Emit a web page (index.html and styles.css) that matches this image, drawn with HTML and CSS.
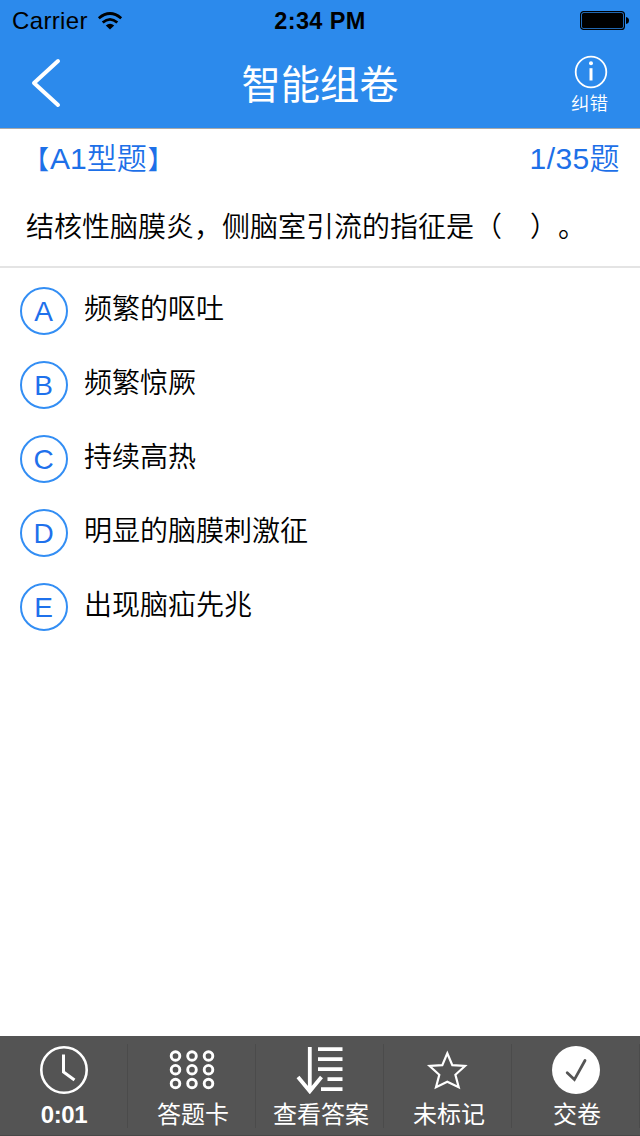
FILE: index.html
```html
<!DOCTYPE html>
<html lang="zh-CN">
<head>
<meta charset="utf-8">
<title>智能组卷</title>
<link rel="stylesheet" href="styles.css">
</head>
<body>
<div class="screen">
  <header class="header">
    <div class="status">
      <div class="carrier"><span>Carrier</span>
        <svg class="wifi" width="26" height="20" viewBox="0 0 26 20"><g fill="none" stroke="#000" stroke-width="2.8"><path d="M1.8 7.2Q13 -2.2 24.2 7.2"/><path d="M5.7 11.5Q13 5.2 20.3 11.5"/></g><path d="M8.8 14.4Q13 11.2 17.2 14.4L13 18.6Z"/></svg>
      </div>
      <time class="clock">2:34 PM</time>
      <svg class="battery" width="50" height="20" viewBox="0 0 50 20"><rect x=".6" y=".6" width="43.8" height="17.8" rx="3" fill="none" stroke="#000" stroke-width="1.2"/><rect x="2" y="2" width="41" height="15" rx="1.6"/><path d="M46 6Q49 6.5 49 9.5T46 13Z"/></svg>
    </div>
    <div class="nav">
      <svg class="back" width="32" height="52" viewBox="0 0 32 52"><path d="M28 4L4 26L28 48" fill="none" stroke="#fff" stroke-width="4" stroke-linecap="round" stroke-linejoin="round"/></svg>
      <h1 class="title">智能组卷</h1>
      <div class="report">
        <svg width="34" height="34" viewBox="0 0 34 34"><circle cx="17" cy="17" r="15.3" fill="none" stroke="#fff" stroke-width="1.8"/><circle cx="17" cy="8.2" r="2" fill="#fff"/><path d="M17 13.2V25.5" stroke="#fff" stroke-width="3"/></svg>
        <span class="report-label">纠错</span>
      </div>
    </div>
  </header>
  <section class="question">
    <div class="meta"><span><span class="bracket open">【</span>A1型题<span class="bracket">】</span></span><span class="counter">1/35题</span></div>
    <p class="stem">结核性脑膜炎，侧脑室引流的指征是（　）。</p>
  </section>
  <ul class="options">
    <li class="option"><span class="letter">A</span><span class="answer">频繁的呕吐</span></li>
    <li class="option"><span class="letter">B</span><span class="answer">频繁惊厥</span></li>
    <li class="option"><span class="letter">C</span><span class="answer">持续高热</span></li>
    <li class="option"><span class="letter">D</span><span class="answer">明显的脑膜刺激征</span></li>
    <li class="option"><span class="letter">E</span><span class="answer">出现脑疝先兆</span></li>
  </ul>
  <footer class="toolbar">
    <div class="tool">
      <svg width="48" height="48" viewBox="0 0 48 48" fill="none" stroke="#fff"><circle cx="24" cy="24" r="22.7" stroke-width="2.6"/><path d="M23.5 8.5V26L34.5 34" stroke-width="3"/></svg>
      <span class="tool-label time">0:01</span>
    </div>
    <div class="tool">
      <svg width="48" height="48" viewBox="0 0 48 48" fill="none" stroke="#fff" stroke-width="2.9"><circle cx="7.5" cy="10" r="4.3"/><circle cx="24" cy="10" r="4.3"/><circle cx="40.5" cy="10" r="4.3"/><circle cx="7.5" cy="23.7" r="4.3"/><circle cx="24" cy="23.7" r="4.3"/><circle cx="40.5" cy="23.7" r="4.3"/><circle cx="7.5" cy="37.5" r="4.3"/><circle cx="24" cy="37.5" r="4.3"/><circle cx="40.5" cy="37.5" r="4.3"/></svg>
      <span class="tool-label">答题卡</span>
    </div>
    <div class="tool">
      <svg width="48" height="48" viewBox="0 0 48 48" fill="none" stroke="#fff"><path d="M13.8 1V45M2 31L13.8 45.3L25.5 31" stroke-width="3.8"/><path d="M22 3.2H46.5M22 13.2H46.5M22 23.2H46.5M31.5 33.2H46.5M25 43.2H46.5" stroke-width="3.8"/></svg>
      <span class="tool-label">查看答案</span>
    </div>
    <div class="tool">
      <svg width="48" height="48" viewBox="0 0 48 48"><path d="M23.3 7.3L28.3 19.2L41 20L31.4 28.8L34.7 41.3L23.3 35.8L12 41.3L15.3 28.8L5.6 20L18.3 19.2Z" fill="none" stroke="#fff" stroke-width="2.2"/></svg>
      <span class="tool-label">未标记</span>
    </div>
    <div class="tool">
      <svg width="48" height="48" viewBox="0 0 48 48"><circle cx="24" cy="24" r="24" fill="#fff"/><path d="M15.2 26.8L22.4 33.6L33 14.5" fill="none" stroke="#555" stroke-width="2.8" stroke-linecap="round"/></svg>
      <span class="tool-label">交卷</span>
    </div>
  </footer>
</div>
</body>
</html>
```
FILE: styles.css
```css
* { box-sizing: border-box; }
body { margin: 0; background: #fff; }
.screen {
  display: flex;
  flex-direction: column;
  width: 640px;
  height: 1136px;
  color: #000;
  font-family: "Liberation Sans", "Noto Sans CJK SC", sans-serif;
  font-weight: 350;
  text-spacing-trim: space-all;
  white-space: nowrap;
}
svg { display: block; }
.header { height: 129px; background: #2c8aec; border-bottom: 1px solid #a9a9a9; }
.status {
  display: grid;
  grid-template-columns: 1fr auto 1fr;
  align-items: center;
  height: 40px;
  padding: 2px 10px 0 12px;
  font-size: 24px;
  line-height: 38px;
}
.carrier { display: flex; align-items: center; gap: 9px; letter-spacing: 0.35px; }
.clock { margin-right: 2px; font-weight: 700; font-size: 23.5px; letter-spacing: 0.4px; }
.battery { justify-self: end; }
.nav {
  display: grid;
  grid-template-columns: 120px 1fr 120px;
  height: 88px;
  color: #fff;
}
.back { margin: 17px 0 0 30px; }
.title { margin: 0; font-size: 39.3px; font-weight: 400; line-height: 90px; text-align: center; }
.report { display: flex; flex-direction: column; align-items: center; padding: 15px 0 0 21px; }
.report-label { margin: 2px 2px 0 0; font-size: 18.5px; line-height: 26px; }
.question { height: 139px; border-bottom: 2px solid #e4e4e4; }
.meta {
  display: flex;
  justify-content: space-between;
  height: 52px;
  padding: 8px 20px 0;
  color: #1d70e8;
  font-size: 30px;
  line-height: 44px;
}
.bracket { display: inline-block; width: 30px; padding-left: 1px; font-size: 26px; }
.open { padding: 0 1px 0 3px; }
.counter { letter-spacing: 0.4px; }
.stem { margin: 26px 0 0 26px; font-size: 28px; line-height: 42px; }
.options {
  display: flex;
  flex-direction: column;
  gap: 26px;
  flex: 1;
  margin: 0;
  padding: 19px 20px 0;
  list-style: none;
}
.option { display: flex; height: 48px; gap: 16px; }
.letter {
  width: 48px;
  height: 48px;
  padding-right: 1px;
  border: 2px solid #338ef4;
  border-radius: 50%;
  color: #1f71ec;
  font-size: 28px;
  line-height: 45px;
  text-align: center;
}
.answer { padding-top: 2px; font-size: 28px; line-height: 42px; }
.toolbar {
  display: grid;
  grid-template-columns: repeat(5, 128px);
  height: 100px;
  background: #545454;
  border-bottom: 1px solid #484848;
  color: #fff;
}
.tool {
  display: flex;
  flex-direction: column;
  align-items: center;
  padding-top: 10px;
  background: linear-gradient(#4b4b4b, #4b4b4b) 127px 8px / 1px 84px no-repeat;
}
.tool-label { margin: 3px 0 0 2px; font-size: 24px; font-weight: 400; line-height: 36px; }
.time { margin-left: 0; font-weight: 700; letter-spacing: -0.4px; }
```
